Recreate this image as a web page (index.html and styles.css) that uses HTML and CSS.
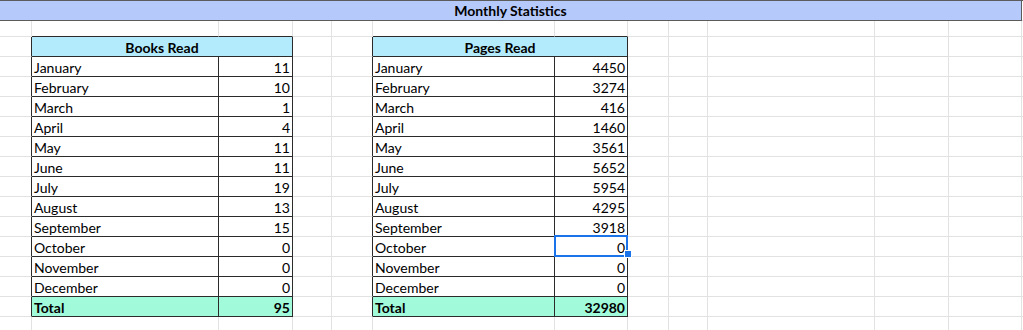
FILE: index.html
```html
<!DOCTYPE html>
<html lang="en">
<head>
<meta charset="utf-8">
<title>Monthly Statistics</title>
<link rel="stylesheet" href="styles.css">
</head>
<body>
<div class="sheet">
  <!-- row 1 -->
  <div class="c title">Monthly Statistics</div><div class="c topline"></div>
  <!-- row 2 -->
  <div class="c"></div><div class="c cap"></div><div class="c cap"></div><div class="c"></div><div class="c"></div><div class="c cap"></div><div class="c cap"></div><div class="c"></div><div class="c"></div><div class="c"></div><div class="c"></div><div class="c"></div><div class="c"></div>
  <!-- row 3 -->
  <div class="c edge"></div><div class="c t head">Books Read</div><div class="c"></div><div class="c edge"></div><div class="c t head">Pages Read</div><div class="c"></div><div class="c"></div><div class="c"></div><div class="c"></div><div class="c"></div><div class="c"></div>

  <div class="c edge"></div><div class="c t">January</div><div class="c t num">11</div><div class="c"></div><div class="c edge"></div><div class="c t">January</div><div class="c t num">4450</div><div class="c"></div><div class="c"></div><div class="c"></div><div class="c"></div><div class="c"></div><div class="c"></div>
  <div class="c edge"></div><div class="c t">February</div><div class="c t num">10</div><div class="c"></div><div class="c edge"></div><div class="c t">February</div><div class="c t num">3274</div><div class="c"></div><div class="c"></div><div class="c"></div><div class="c"></div><div class="c"></div><div class="c"></div>
  <div class="c edge"></div><div class="c t">March</div><div class="c t num">1</div><div class="c"></div><div class="c edge"></div><div class="c t">March</div><div class="c t num">416</div><div class="c"></div><div class="c"></div><div class="c"></div><div class="c"></div><div class="c"></div><div class="c"></div>
  <div class="c edge"></div><div class="c t">April</div><div class="c t num">4</div><div class="c"></div><div class="c edge"></div><div class="c t">April</div><div class="c t num">1460</div><div class="c"></div><div class="c"></div><div class="c"></div><div class="c"></div><div class="c"></div><div class="c"></div>
  <div class="c edge"></div><div class="c t">May</div><div class="c t num">11</div><div class="c"></div><div class="c edge"></div><div class="c t">May</div><div class="c t num">3561</div><div class="c"></div><div class="c"></div><div class="c"></div><div class="c"></div><div class="c"></div><div class="c"></div>
  <div class="c edge"></div><div class="c t">June</div><div class="c t num">11</div><div class="c"></div><div class="c edge"></div><div class="c t">June</div><div class="c t num">5652</div><div class="c"></div><div class="c"></div><div class="c"></div><div class="c"></div><div class="c"></div><div class="c"></div>
  <div class="c edge"></div><div class="c t">July</div><div class="c t num">19</div><div class="c"></div><div class="c edge"></div><div class="c t">July</div><div class="c t num">5954</div><div class="c"></div><div class="c"></div><div class="c"></div><div class="c"></div><div class="c"></div><div class="c"></div>
  <div class="c edge"></div><div class="c t">August</div><div class="c t num">13</div><div class="c"></div><div class="c edge"></div><div class="c t">August</div><div class="c t num">4295</div><div class="c"></div><div class="c"></div><div class="c"></div><div class="c"></div><div class="c"></div><div class="c"></div>
  <div class="c edge"></div><div class="c t">September</div><div class="c t num">15</div><div class="c"></div><div class="c edge"></div><div class="c t">September</div><div class="c t num">3918</div><div class="c"></div><div class="c"></div><div class="c"></div><div class="c"></div><div class="c"></div><div class="c"></div>
  <div class="c edge"></div><div class="c t">October</div><div class="c t num">0</div><div class="c"></div><div class="c edge"></div><div class="c t">October</div><div class="c t num selected">0</div><div class="c"></div><div class="c"></div><div class="c"></div><div class="c"></div><div class="c"></div><div class="c"></div>
  <div class="c edge"></div><div class="c t">November</div><div class="c t num">0</div><div class="c"></div><div class="c edge"></div><div class="c t">November</div><div class="c t num">0</div><div class="c"></div><div class="c"></div><div class="c"></div><div class="c"></div><div class="c"></div><div class="c"></div>
  <div class="c edge"></div><div class="c t">December</div><div class="c t num">0</div><div class="c"></div><div class="c edge"></div><div class="c t">December</div><div class="c t num">0</div><div class="c"></div><div class="c"></div><div class="c"></div><div class="c"></div><div class="c"></div><div class="c"></div>
  <div class="c edge"></div><div class="c t total">Total</div><div class="c t total num">95</div><div class="c"></div><div class="c edge"></div><div class="c t total">Total</div><div class="c t total num">32980</div><div class="c"></div><div class="c"></div><div class="c"></div><div class="c"></div><div class="c"></div><div class="c"></div>
  <!-- row 17 -->
  <div class="c"></div><div class="c"></div><div class="c"></div><div class="c"></div><div class="c"></div><div class="c"></div><div class="c"></div><div class="c"></div><div class="c"></div><div class="c"></div><div class="c"></div><div class="c"></div><div class="c"></div>
</div>
</body>
</html>
```

FILE: styles.css
```css
html, body {
  margin: 0;
  padding: 0;
  background: #ffffff;
}

body {
  font-family: Lato, "Noto Sans", sans-serif;
  font-size: 14px;
  color: #000000;
  overflow: hidden;
}

.sheet {
  display: grid;
  grid-template-columns: 32px 187px 74px 39px 41px 182px 73px 41px 39px 167px 74px 73px 1fr;
  grid-template-rows: 21px 16px repeat(15, 20px);
  width: 1023px;
}

.c {
  box-sizing: border-box;
  border-right: 1px solid #e2e2e2;
  border-bottom: 1px solid #e2e2e2;
  padding: 1px 2px 0 2px;
  line-height: 19px;
  white-space: nowrap;
  overflow: hidden;
  background: #ffffff;
}

.title {
  grid-column: span 12;
  background: #b6c9fb;
  border-top: 1px solid #5c5c5c;
  border-right: 1px solid #5c5c5c;
  border-bottom: 1px solid #5c5c5c;
  padding-top: 0;
  font-weight: 700;
  text-align: center;
}

.topline {
  border-top: 1px solid #5c5c5c;
}

.cap {
  border-bottom-color: #2b2b2b;
}

.edge {
  border-right-color: #2b2b2b;
}

.t {
  border-right-color: #2b2b2b;
  border-bottom-color: #2b2b2b;
}

.head {
  grid-column: span 2;
  background: #b3ebfd;
  font-weight: 700;
  text-align: center;
}

.num {
  text-align: right;
}

.total {
  background: #a1fbdb;
  font-weight: 700;
}

.selected {
  position: relative;
  overflow: visible;
}

.selected::before {
  content: "";
  position: absolute;
  top: -2px;
  left: -1px;
  right: -1px;
  bottom: -1px;
  border: 2px solid #1a73e8;
}

.selected::after {
  content: "";
  position: absolute;
  right: -4px;
  bottom: -1px;
  width: 6px;
  height: 6px;
  background: #1a73e8;
  border: 1px solid #ffffff;
  box-sizing: content-box;
  margin: 0 -1px -1px 0;
}
```
